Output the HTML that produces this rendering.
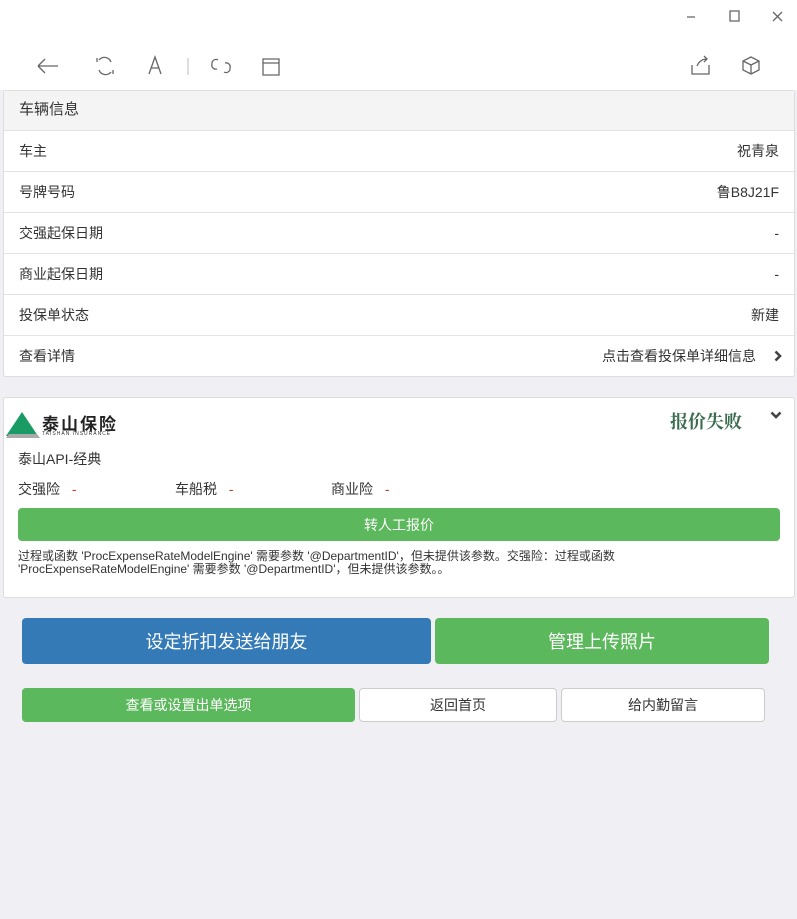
<!DOCTYPE html><html><head><meta charset="utf-8"><style>
*{box-sizing:border-box;margin:0;padding:0}
body{width:797px;height:919px;background:#efeff4;font-family:"Liberation Sans","Noto Sans CJK SC",sans-serif;font-size:14px;color:#333;position:relative;overflow:hidden}
.top{position:absolute;left:0;top:0;width:797px;height:90px;background:#fff}
.abs{position:absolute}
.card{position:absolute;left:3px;width:792px;background:#fff;border:1px solid #ddd;border-radius:3px}
.row{height:41px;border-top:1px solid #e3e3e3;display:flex;justify-content:space-between;align-items:center;padding:0 15px}
.btn{position:absolute;display:flex;align-items:center;justify-content:center;border-radius:4px;color:#fff}
</style></head><body>
<div class="top">
<svg class="abs" style="left:0;top:0" width="797" height="90" fill="none" stroke="#666" stroke-width="1.3">
<path d="M687 17h8M730 11h9v10h-9zM773 12l9 9M782 12l-9 9"/>
<path d="M38 66h20M38 66l7-7M38 66l7 7"/>
<path d="M99 60a7 7 0 0 1 12 2M111 72a7 7 0 0 1-12-2M97 62v-4M113 70v4"/>
<path d="M149 74l6-17 6 17M151 68h8"/>
<path d="M188 58v17" stroke="#ccc"/>
<path d="M218 60a4 4 0 0 0-6 4 4 4 0 0 0 5 5M224 72a4 4 0 0 0 6-4 4 4 0 0 0-5-5"/>
<path d="M263 59h16v16h-16zM263 63h16"/>
<path d="M692 65v9h17v-9M697 66q3-7 10-7M704 56l3 3-3 3"/>
<path d="M751 57l8 4v9l-8 4-8-4v-9zM743 61l8 4 8-4M751 65v9"/>
</svg>
</div>
<div class="card" style="top:90px;height:287px">
<div style="height:39px;background:#f4f4f4;padding:0 15px;line-height:38px;font-size:15px">车辆信息</div>
<div class="row"><span>车主</span><span>祝青泉</span></div>
<div class="row"><span>号牌号码</span><span>鲁B8J21F</span></div>
<div class="row"><span>交强起保日期</span><span>-</span></div>
<div class="row"><span>商业起保日期</span><span>-</span></div>
<div class="row"><span>投保单状态</span><span>新建</span></div>
<div class="row"><span>查看详情</span><span style="display:flex;align-items:center">点击查看投保单详细信息 <svg width="8" height="12" style="margin-left:18px;margin-right:-3px"><path d="M1.5 1.5l4.5 4.5-4.5 4.5" stroke="#444" stroke-width="2.6" fill="none"/></svg></span></div>
</div>
<div class="card" style="top:397px;height:201px">
<svg class="abs" style="left:2px;top:14px" width="40" height="28"><path d="M16 0L0 24h32z" fill="#1a9a64"/><path d="M3 22h28l3 4H0z" fill="#aaa"/></svg>
<div class="abs" style="left:38px;top:12px;font-size:17px;font-weight:bold;color:#222;letter-spacing:2px">泰山保险</div>
<div class="abs" style="left:38px;top:33px;font-size:5px;color:#333;letter-spacing:1px">TAISHAN INSURANCE</div>
<div class="abs" style="right:52px;top:10px;font-size:18px;font-weight:bold;color:#3a6b4f;font-family:'Noto Serif CJK SC',serif">报价失败</div>
<svg class="abs" style="right:12px;top:13px" width="12" height="8"><path d="M1.5 1.5l4.5 4.5 4.5-4.5" stroke="#444" stroke-width="2.6" fill="none"/></svg>
<div class="abs" style="left:14px;top:51px">泰山API-经典</div>
<div class="abs" style="left:14px;top:81px">交强险 <span style="color:#c0392b;margin-left:8px">-</span></div>
<div class="abs" style="left:171px;top:81px">车船税 <span style="color:#c0392b;margin-left:8px">-</span></div>
<div class="abs" style="left:327px;top:81px">商业险 <span style="color:#c0392b;margin-left:8px">-</span></div>
<div class="btn" style="left:14px;top:110px;width:762px;height:33px;background:#5cb85c">转人工报价</div>
<div class="abs" style="left:14px;top:152px;font-size:12px;line-height:13px;width:760px">过程或函数 'ProcExpenseRateModelEngine' 需要参数 '@DepartmentID'，但未提供该参数。交强险：过程或函数 'ProcExpenseRateModelEngine' 需要参数 '@DepartmentID'，但未提供该参数。。</div>
</div>
<div class="btn" style="left:22px;top:618px;width:409px;height:46px;background:#337ab7;font-size:18px">设定折扣发送给朋友</div>
<div class="btn" style="left:435px;top:618px;width:334px;height:46px;background:#5cb85c;font-size:18px">管理上传照片</div>
<div class="btn" style="left:22px;top:688px;width:333px;height:34px;background:#5cb85c">查看或设置出单选项</div>
<div class="btn" style="left:359px;top:688px;width:198px;height:34px;background:#fff;border:1px solid #ccc;color:#333">返回首页</div>
<div class="btn" style="left:561px;top:688px;width:204px;height:34px;background:#fff;border:1px solid #ccc;color:#333">给内勤留言</div>
</body></html>
